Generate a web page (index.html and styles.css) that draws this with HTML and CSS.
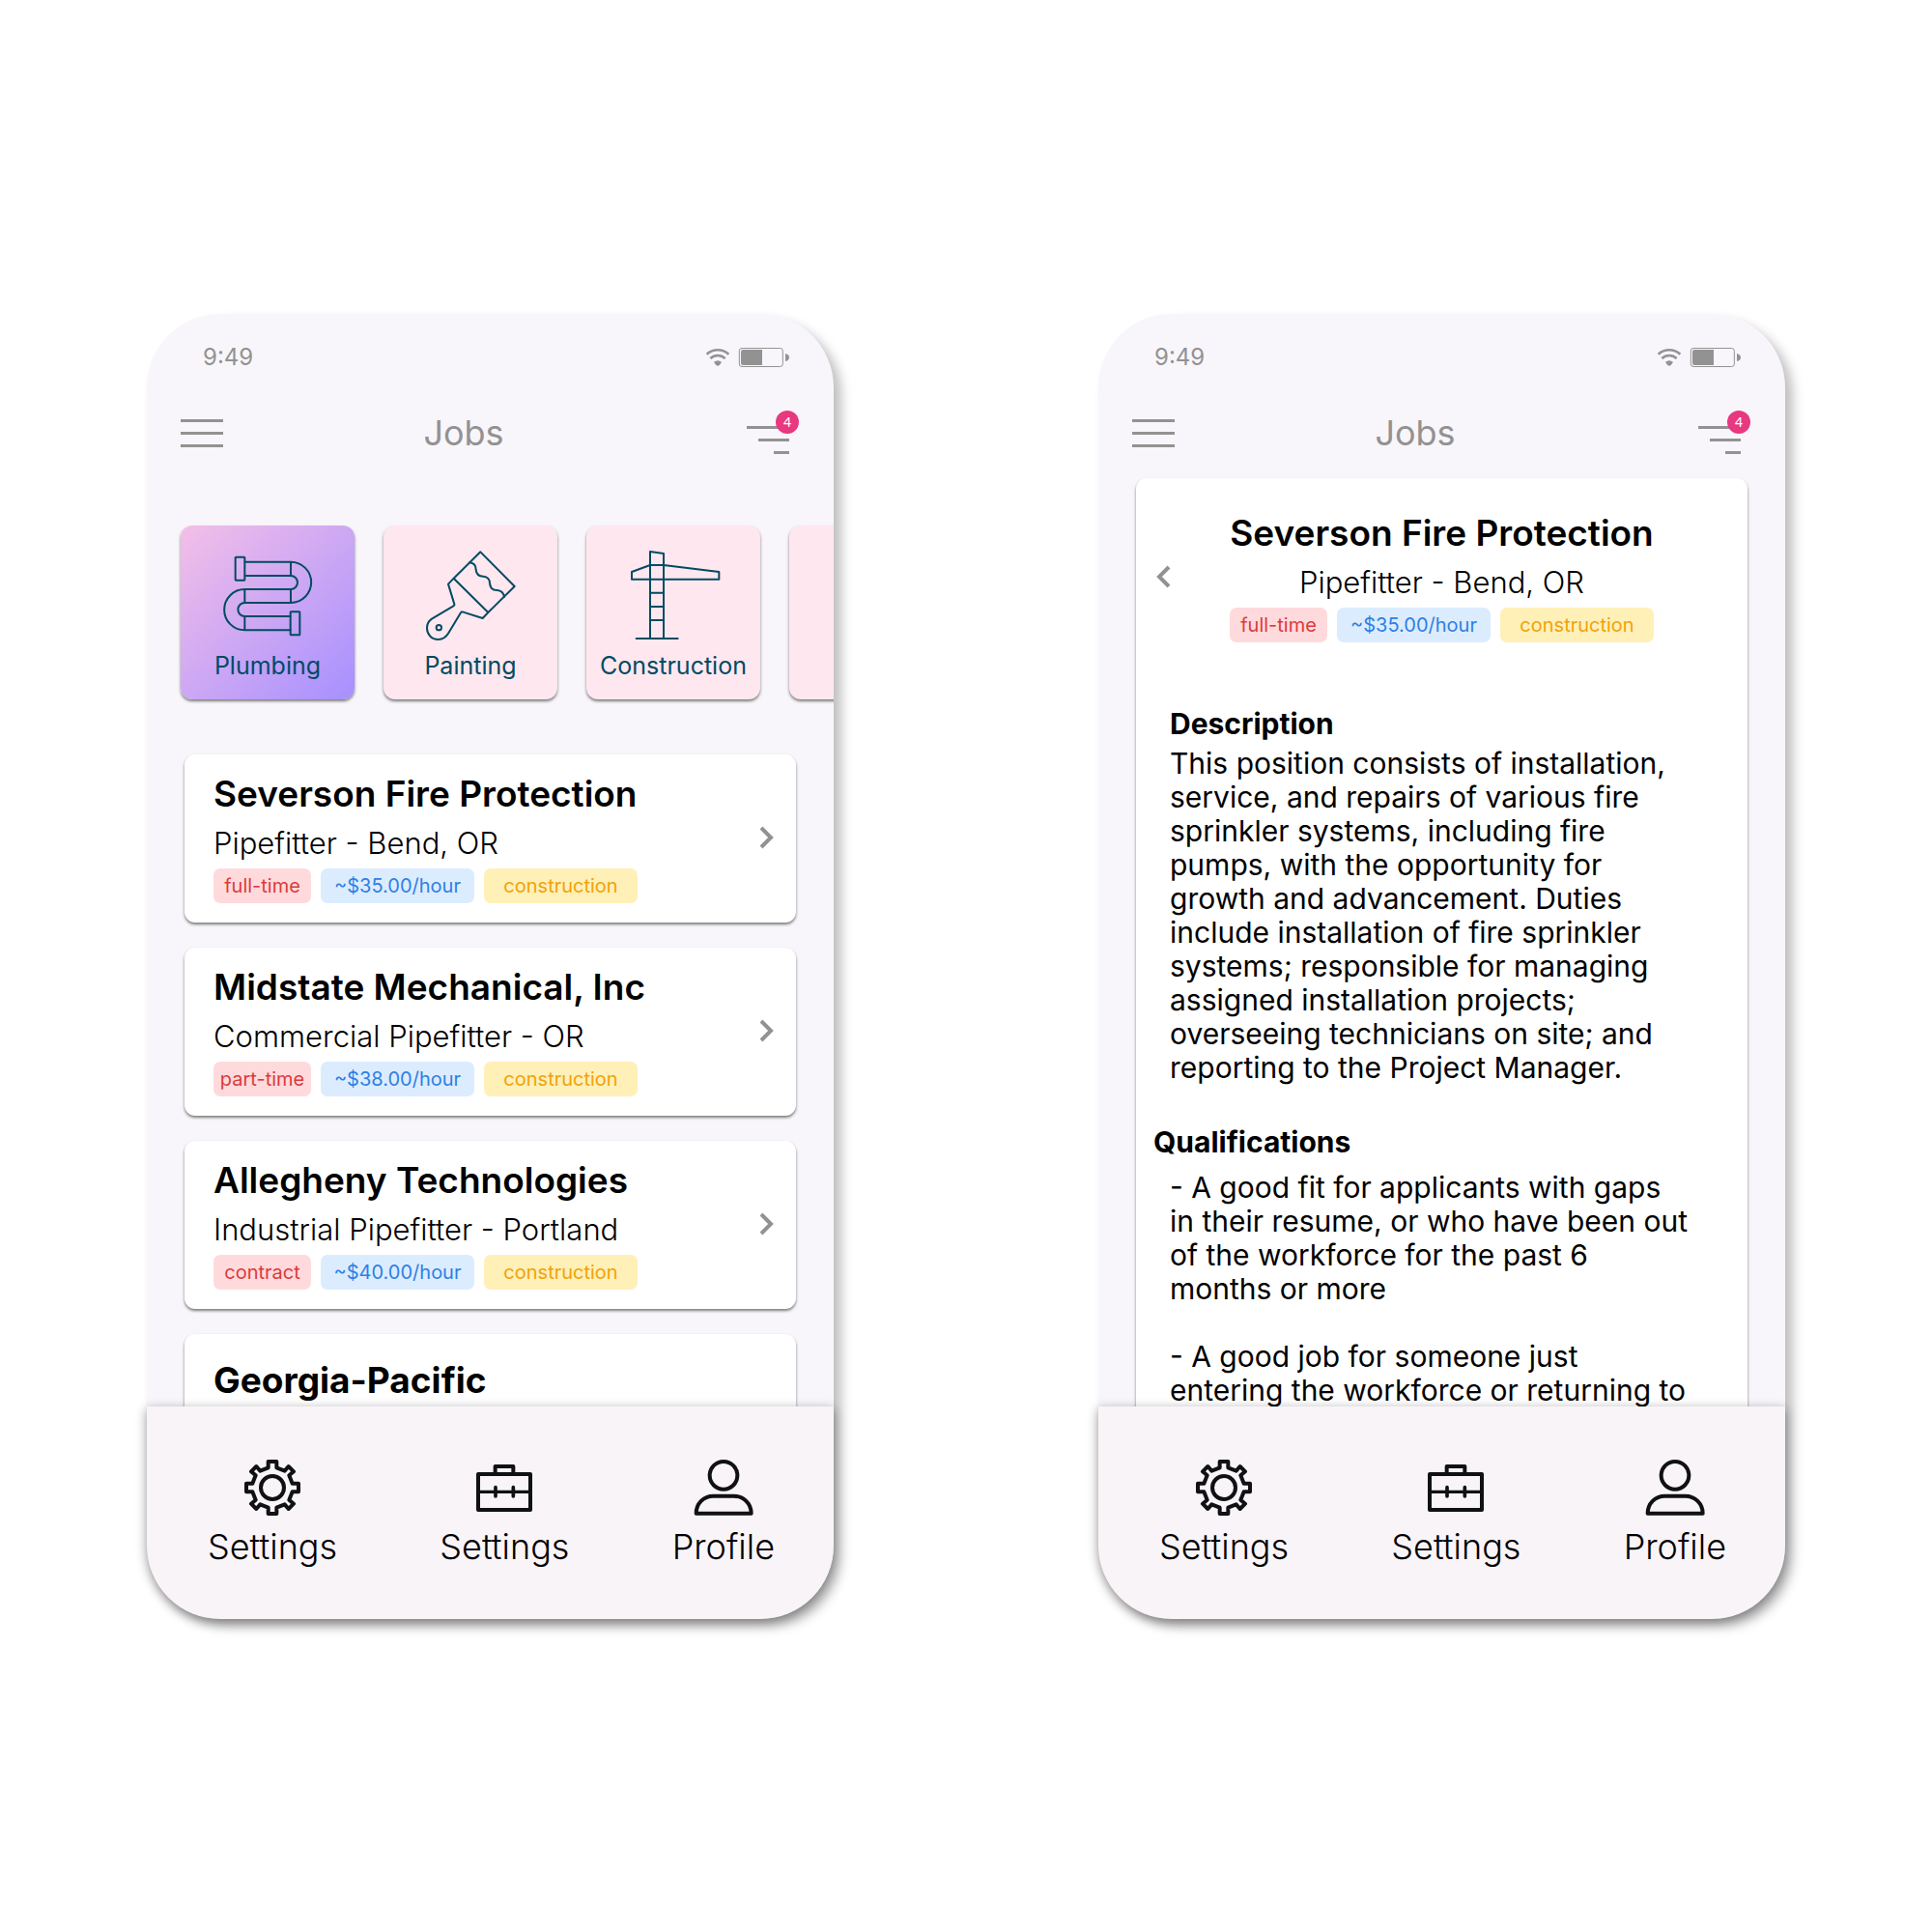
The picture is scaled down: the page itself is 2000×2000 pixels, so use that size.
FILE: index.html
```html
<!DOCTYPE html>
<html lang="en">
<head>
<meta charset="utf-8">
<meta name="viewport" content="width=device-width, initial-scale=1">
<title>Jobs</title>
<link rel="stylesheet" href="styles.css">
</head>
<body>
<svg class="sprite" aria-hidden="true">
  <symbol id="status" viewBox="93 57 258 60">
    <g fill="none" stroke="#929292">
      <path d="M95 77a50 50 0 0 1 68 0" stroke-width="8"/>
      <path d="M106 90a34 34 0 0 1 46 0" stroke-width="8"/>
      <rect x="196" y="58.500" width="135" height="57" rx="8" stroke-width="3"/>
    </g>
    <g fill="#929292">
      <path d="M117 101q12-9 24 0l-5 8-7 5-7-5z"/>
      <path d="M207 63h60v48h-60q-6 0-6-7V70q0-7 6-7z"/>
      <path d="M339 75q12 3 12 12t-12 12z"/>
    </g>
  </symbol>
  <symbol id="menu" viewBox="0 0 44 29"><path d="M0 1.500h44M0 14.500h44M0 27.500h44" stroke="#929292" stroke-width="3"/></symbol>
  <symbol id="filter" viewBox="0 0 54 46"><path d="M0 17.500h44M12 30.500h32M28 43.500h16" stroke="#929292" stroke-width="3"/></symbol>
  <symbol id="gear" viewBox="-93 -93 186 186">
    <g fill="none" stroke="#101114" stroke-width="12" stroke-linejoin="round">
      <circle r="36"/>
      <path d="M13-81V-62L38-52 50-66 66-50 52-38 62-13H81V13H62L52 38 66 50 50 66 38 52 13 62V81H-13V62L-38 52-50 66-66 50-52 38-62 13H-81V-13H-62L-52-38-66-50-50-66-38-52-13-62V-81Z"/>
    </g>
  </symbol>
  <symbol id="briefcase" viewBox="882 57 186 186">
    <g fill="none" stroke="#101114" stroke-width="12" stroke-linejoin="round">
      <path d="M894 108h162v111H894zM947 108V84h56v24"/>
      <path d="M894 163h162" stroke-width="10"/>
      <path d="M948 149v28M1003 149v28" stroke-linecap="round" stroke-width="11"/>
    </g>
  </symbol>
  <symbol id="person" viewBox="475 207 186 186">
    <g fill="none" stroke="#101114" stroke-width="12" stroke-linejoin="round">
      <circle cx="568" cy="262" r="43"/>
      <path d="M483 380c0-30 23-54 53-54h64c30 0 54 24 54 54z"/>
    </g>
  </symbol>
</svg>

<main class="board">
  <section class="phone" aria-label="Job list">
    <div class="status"><span>9:49</span><svg class="status-icons"><use href="#status"/></svg></div>
    <header class="topbar">
      <button class="icon-button" type="button" aria-label="Menu"><svg class="menu-icon"><use href="#menu"/></svg></button>
      <h1 class="screen-title">Jobs</h1>
      <button class="icon-button" type="button" aria-label="Filters"><svg class="filter-icon"><use href="#filter"/></svg><span class="badge">4</span></button>
    </header>
    <div class="content content--list">
      <div class="categories">
        <button class="category category--active" type="button">
          <svg class="category-icon" viewBox="177 114 288 288">
            <rect x="221" y="140" width="29" height="72" rx="2"/>
            <rect x="392" y="310" width="29" height="72" rx="2"/>
            <path d="M251 155h142a63 63 0 0 1 0 127H250a21 21 0 0 0 0 42h142M251 198h142a21 21 0 0 1 0 42H250a63 63 0 0 0 0 127h142M393 155v43M393 240v42M250 240v42M250 324v43"/>
          </svg>
          <span>Plumbing</span>
        </button>
        <button class="category" type="button">
          <svg class="category-icon" viewBox="57 54 288 288">
            <path d="M232 64 338 171 256 252 239 270 176 250Q172 250 170 254L133 316C124 331 112 336 101 336 80 336 66 320 66 300 66 287 72 278 81 272L148 232Q152 230 151 226L132 164 149 146ZM149 146 256 252"/>
            <path d="M199 97C214 99 218 108 218 119 219 132 228 140 241 140 254 141 261 150 261 161 262 175 271 183 284 183 297 184 304 191 306 204"/>
            <circle cx="103" cy="299" r="8"/>
          </svg>
          <span>Painting</span>
        </button>
        <button class="category" type="button">
          <svg class="category-icon" viewBox="354 114 288 288">
            <path d="M426 393V123L468 129V393M383 393H512M369 209H640V186L468 165H426L369 186ZM426 251h42M426 294h42M426 336h42"/>
          </svg>
          <span>Construction</span>
        </button>
        <button class="category" type="button" aria-label="More categories"></button>
      </div>
      <div class="jobs">
        <a class="job" href="#severson">
          <div class="job-body">
            <h2 class="job-title">Severson Fire Protection</h2>
            <p class="job-role">Pipefitter - Bend, OR</p>
            <div class="tags"><span class="tag tag--type">full-time</span><span class="tag tag--pay">~$35.00/hour</span><span class="tag tag--field">construction</span></div>
          </div>
          <svg class="chevron" viewBox="0 0 16 26"><path d="M3 3l10 10L3 23"/></svg>
        </a>
        <a class="job" href="#midstate">
          <div class="job-body">
            <h2 class="job-title">Midstate Mechanical, Inc</h2>
            <p class="job-role">Commercial Pipefitter - OR</p>
            <div class="tags"><span class="tag tag--type">part-time</span><span class="tag tag--pay">~$38.00/hour</span><span class="tag tag--field">construction</span></div>
          </div>
          <svg class="chevron" viewBox="0 0 16 26"><path d="M3 3l10 10L3 23"/></svg>
        </a>
        <a class="job" href="#allegheny">
          <div class="job-body">
            <h2 class="job-title">Allegheny Technologies</h2>
            <p class="job-role">Industrial Pipefitter - Portland</p>
            <div class="tags"><span class="tag tag--type">contract</span><span class="tag tag--pay">~$40.00/hour</span><span class="tag tag--field">construction</span></div>
          </div>
          <svg class="chevron" viewBox="0 0 16 26"><path d="M3 3l10 10L3 23"/></svg>
        </a>
        <a class="job job--featured" href="#georgia">
          <div class="job-body">
            <h2 class="job-title">Georgia-Pacific</h2>
          </div>
        </a>
      </div>
    </div>
    <nav class="tabbar" aria-label="Job list tabs">
      <a class="tab" href="#settings"><svg class="tab-icon"><use href="#gear"/></svg>Settings</a>
      <a class="tab" href="#work"><svg class="tab-icon"><use href="#briefcase"/></svg>Settings</a>
      <a class="tab" href="#profile"><svg class="tab-icon"><use href="#person"/></svg>Profile</a>
    </nav>
  </section>

  <section class="phone" aria-label="Job details">
    <div class="status"><span>9:49</span><svg class="status-icons"><use href="#status"/></svg></div>
    <header class="topbar">
      <button class="icon-button" type="button" aria-label="Menu"><svg class="menu-icon"><use href="#menu"/></svg></button>
      <h1 class="screen-title">Jobs</h1>
      <button class="icon-button" type="button" aria-label="Filters"><svg class="filter-icon"><use href="#filter"/></svg><span class="badge">4</span></button>
    </header>
    <div class="content content--detail">
      <article class="detail">
        <div class="detail-head">
          <button class="icon-button" type="button" aria-label="Back"><svg class="chevron" viewBox="0 0 16 26"><path d="M13 3L3 13l10 10"/></svg></button>
          <div class="detail-intro">
            <h2 class="job-title">Severson Fire Protection</h2>
            <p class="job-role">Pipefitter - Bend, OR</p>
            <div class="tags"><span class="tag tag--type">full-time</span><span class="tag tag--pay">~$35.00/hour</span><span class="tag tag--field">construction</span></div>
          </div>
        </div>
        <h3 class="detail-heading detail-heading--inset">Description</h3>
        <p class="detail-text">This position consists of installation, service, and repairs of various fire sprinkler systems, including fire pumps, with the opportunity for growth and advancement. Duties include installation of fire sprinkler systems; responsible for managing assigned installation projects; overseeing technicians on site; and reporting to the Project Manager.</p>
        <h3 class="detail-heading">Qualifications</h3>
        <p class="detail-text">- A good fit for applicants with gaps in their resume, or who have been out of the workforce for the past 6 months or more</p>
        <p class="detail-text">- A good job for someone just entering the workforce or returning to</p>
      </article>
    </div>
    <nav class="tabbar" aria-label="Job details tabs">
      <a class="tab" href="#settings"><svg class="tab-icon"><use href="#gear"/></svg>Settings</a>
      <a class="tab" href="#work"><svg class="tab-icon"><use href="#briefcase"/></svg>Settings</a>
      <a class="tab" href="#profile"><svg class="tab-icon"><use href="#person"/></svg>Profile</a>
    </nav>
  </section>
</main>
</body>
</html>
```
FILE: styles.css
```css
* {
  box-sizing: border-box;
}

body {
  margin: 0;
  background: #fff;
  color: #000;
  font-family: Inter, "Liberation Sans", Arial, sans-serif;
}

h1, h2, h3, p {
  margin: 0;
}

a {
  color: inherit;
  text-decoration: none;
}

button {
  padding: 0;
  border: 0;
  background: none;
  color: inherit;
  font: inherit;
  cursor: pointer;
}

svg {
  display: block;
  flex: none;
}

.sprite {
  position: absolute;
  width: 0;
  height: 0;
}

.board {
  display: grid;
  grid-template-columns: 1fr 1fr;
  gap: 274px;
  padding: 325px 152px;
}

.phone {
  display: flex;
  flex-direction: column;
  min-width: 0;
  aspect-ratio: 711 / 1351;
  border-radius: 76px;
  background: #f8f6fa;
  box-shadow: 8px 8px 12px rgba(0, 0, 0, 0.25);
}

.status {
  display: flex;
  justify-content: space-between;
  align-items: center;
  padding: 34px 46px 0 58px;
  color: #929292;
  font-size: 24px;
  line-height: 22px;
}

.status-icons {
  width: 86px;
  height: 20px;
}

.topbar {
  display: flex;
  align-items: center;
  padding: 44px 36px 0 35px;
}

.icon-button {
  position: relative;
  flex: none;
}

.menu-icon {
  width: 44px;
  height: 29px;
}

.filter-icon {
  width: 54px;
  height: 46px;
}

.badge {
  position: absolute;
  top: 0;
  right: 0;
  width: 24px;
  height: 24px;
  border-radius: 50%;
  background: #e8387f;
  color: #fff;
  font-family: "Noto Sans", sans-serif;
  font-size: 14px;
  line-height: 24px;
  text-align: center;
}

.screen-title {
  flex: 1;
  padding-right: 44px;
  color: #929292;
  font-size: 36px;
  font-weight: 400;
  line-height: 46px;
  text-align: center;
}

.content {
  flex: 1;
  min-height: 0;
  overflow: hidden;
}

.content--list {
  padding-top: 73px;
}

.content--detail {
  padding: 24px 39px 0;
}

.categories {
  display: flex;
  gap: 30px;
  padding-left: 35px;
}

.category {
  display: flex;
  flex: none;
  flex-direction: column;
  align-items: center;
  gap: 10px;
  width: 180px;
  height: 180px;
  padding-top: 24px;
  border-radius: 12px;
  background: #ffe7ef;
  box-shadow: 0 2px 3px rgba(0, 0, 0, 0.5);
  color: #004b63;
  font-size: 25px;
  line-height: 30px;
}

.category--active {
  background: linear-gradient(135deg, #f4bfe8, #a690ff);
}

.category-icon {
  width: 96px;
  height: 96px;
  overflow: visible;
  fill: none;
  stroke: #004b63;
  stroke-width: 6;
  stroke-linecap: round;
  stroke-linejoin: round;
}

.jobs {
  display: flex;
  flex-direction: column;
  gap: 26px;
  padding: 57px 39px 0;
}

.job {
  display: flex;
  justify-content: space-between;
  align-items: center;
  min-height: 174px;
  padding: 18px 23px 20px 30px;
  border-radius: 11px;
  background: #fff;
  box-shadow: 0 2px 3px rgba(0, 0, 0, 0.5);
}

.job--featured {
  align-items: flex-start;
  padding-top: 25px;
}

.job-title {
  font-size: 37px;
  font-weight: 600;
  line-height: 46px;
}

.job--featured .job-title {
  font-weight: 700;
}

.job-role {
  margin-top: 4px;
  font-size: 31px;
  font-weight: 300;
  line-height: 48px;
}

.tags {
  display: flex;
  gap: 10px;
  margin-top: 2px;
}

.tag {
  width: 159px;
  border-radius: 7px;
  font-size: 20px;
  line-height: 36px;
  text-align: center;
}

.tag--type {
  width: 101px;
  background: #ffdadd;
  color: #dd3a3a;
}

.tag--pay {
  background: #dcecff;
  color: #2f80e4;
}

.tag--field {
  background: #fff0b8;
  color: #f0a30a;
}

.chevron {
  width: 16px;
  height: 26px;
  fill: none;
  stroke: #929292;
  stroke-width: 4;
}

.detail {
  min-height: 100%;
  padding: 34px 18px 0;
  border-radius: 11px 11px 0 0;
  background: #fff;
  box-shadow: 0 2px 3px rgba(0, 0, 0, 0.5);
}

.detail-head {
  display: flex;
  align-items: center;
  margin-bottom: 66px;
  padding: 0 3px;
}

.detail-intro {
  display: flex;
  flex: 1;
  flex-direction: column;
  align-items: center;
  padding-right: 16px;
}

.detail-heading {
  margin-bottom: 12px;
  font-size: 30px;
  font-weight: 700;
  line-height: 36px;
}

.detail-heading--inset {
  margin-bottom: 6px;
  padding-left: 17px;
}

.detail-text {
  margin-bottom: 35px;
  padding: 0 43px 0 17px;
  font-size: 30px;
  line-height: 35px;
}

.detail-text + .detail-heading {
  margin-top: 41px;
}

.tabbar {
  position: relative;
  display: flex;
  flex: none;
  justify-content: space-between;
  align-items: flex-start;
  min-height: 220px;
  padding: 53px 61px 0 63px;
  border-radius: 0 0 76px 76px;
  background: #f8f4f8;
  box-shadow: 0 3px 12px rgba(0, 0, 0, 0.4);
}

.tab {
  display: flex;
  flex-direction: column;
  align-items: center;
  gap: 8px;
  font-size: 36px;
  font-weight: 300;
  line-height: 44px;
}

.tab-icon {
  width: 62px;
  height: 62px;
}
```
